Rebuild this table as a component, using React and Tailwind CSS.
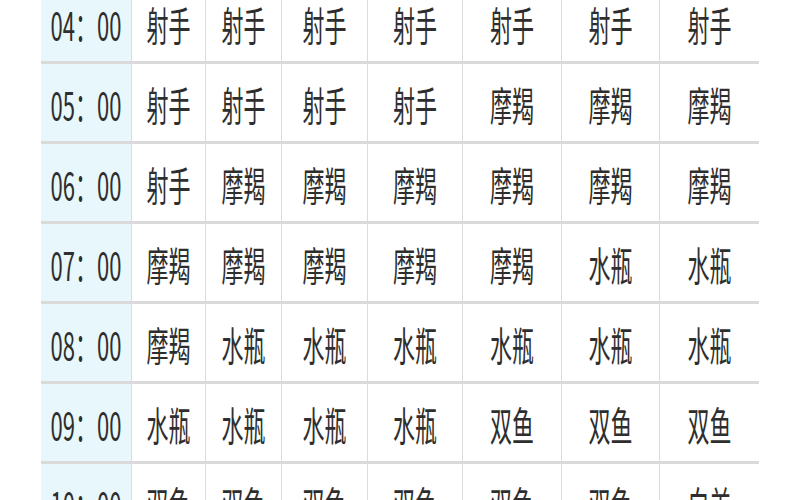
import React from 'react'

const cols = ['w-[91px]', 'w-[74px]', 'w-[76px]', 'w-[86px]', 'w-[95px]', 'w-[99px]', 'w-[98px]', 'w-[99px]']

const rows = [
  ['04：00', '射手', '射手', '射手', '射手', '射手', '射手', '射手'],
  ['05：00', '射手', '射手', '射手', '射手', '摩羯', '摩羯', '摩羯'],
  ['06：00', '射手', '摩羯', '摩羯', '摩羯', '摩羯', '摩羯', '摩羯'],
  ['07：00', '摩羯', '摩羯', '摩羯', '摩羯', '摩羯', '水瓶', '水瓶'],
  ['08：00', '摩羯', '水瓶', '水瓶', '水瓶', '水瓶', '水瓶', '水瓶'],
  ['09：00', '水瓶', '水瓶', '水瓶', '水瓶', '双鱼', '双鱼', '双鱼'],
  ['10：00', '双鱼', '双鱼', '双鱼', '双鱼', '双鱼', '双鱼', '白羊'],
]

const App = () => {
  return (
    <div className="w-[800px] h-[500px] overflow-hidden bg-white">
      <div
        className="ml-[41px] -mt-[16px] w-[718px] text-[#2e2e2e] text-[22px] leading-none"
        style={{ fontFamily: '"Noto Sans CJK SC", "Noto Sans", sans-serif' }}
      >
        {rows.map((row, ri) => (
          <div key={ri} className="flex h-[80px] border-b-[3px] border-[#dadada]">
            {row.map((cell, ci) => (
              <div
                key={ci}
                className={`${cols[ci]} flex items-center justify-center pt-[1px] ${ci === 0 ? 'bg-[#e7f7fb]' : 'bg-white'} ${ci < 7 ? 'border-r border-[#dcdcdc]' : ''}`}
              >
                <span className="inline-block scale-y-[1.8] whitespace-nowrap">{cell}</span>
              </div>
            ))}
          </div>
        ))}
      </div>
    </div>
  )
}

export default App
